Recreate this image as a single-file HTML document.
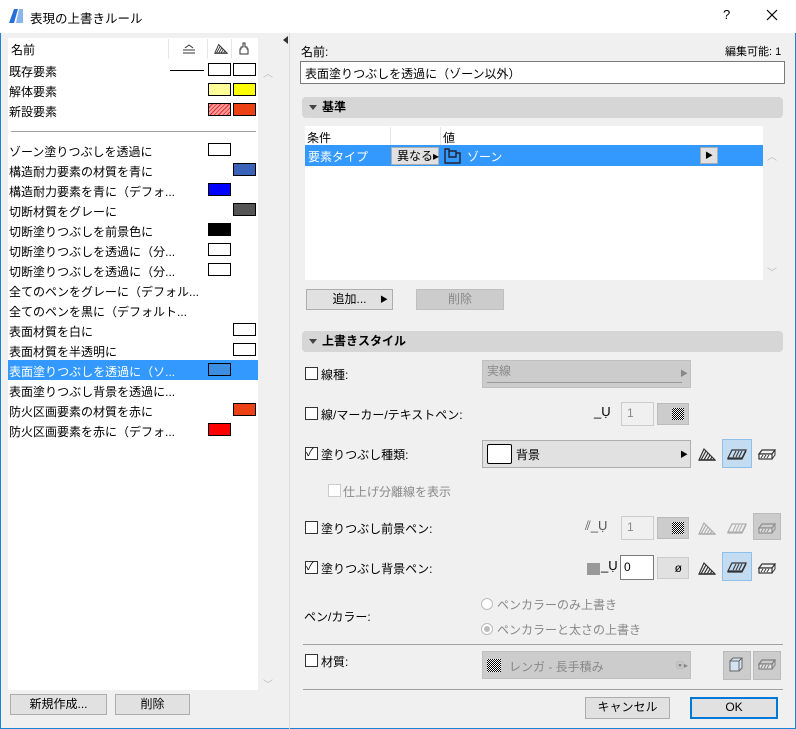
<!DOCTYPE html><html><head><meta charset="utf-8"><style>
*{box-sizing:border-box;margin:0;padding:0}
body{width:796px;height:729px;overflow:hidden;background:#f0f0f0;font-family:"Liberation Sans","Noto Sans CJK JP",sans-serif;font-size:12px;color:#000;position:relative}
.a{position:absolute;white-space:nowrap}
.sw{position:absolute;width:23px;height:13px;border:1px solid #000}
.btn{position:absolute;background:#e1e1e1;border:1px solid #adadad;text-align:center;line-height:19px}
.cb{position:absolute;width:13px;height:13px;border:1px solid #333;background:#fff}
.sec{position:absolute;left:302px;width:481px;height:21px;background:#d6d6d6;border-radius:4px;font-weight:bold;line-height:21px;padding-left:20px}
.sec:before{content:"";position:absolute;left:7px;top:8px;border-left:4px solid transparent;border-right:4px solid transparent;border-top:5px solid #444}
.fld{position:absolute;background:#ccc;border:1px solid #c0c0c0}
</style></head><body>
<svg width="0" height="0" style="position:absolute"><defs>
<symbol id="hat" viewBox="0 0 18 14"><path d="M1 13 L6 2 L17 13 Z M3 13 L8 4 M6 13 L10 6 M9 13 L12 8 M12 13 L14 10" fill="none" stroke="#333" stroke-width="1.2"/><path d="M1 13H17" stroke="#333" stroke-width="1.5"/></symbol>
<symbol id="box" viewBox="0 0 20 14"><path d="M1 12 L5 4 H19 L15 12 Z M1 12 V13 H15 L19 5" fill="none" stroke="#333" stroke-width="1.2"/><path d="M6 11 L9 5 M9 11 L12 5 M12 11 L15 5" stroke="#333"/></symbol>
<symbol id="flat" viewBox="0 0 20 14"><path d="M2 7 L5 3 H18 L15 7 Z" fill="none" stroke="#333" stroke-width="1.2"/><rect x="2" y="7" width="13" height="5" fill="#fff" stroke="#333" stroke-width="1.2"/><path d="M15 12 L18 8 V3" fill="none" stroke="#333"/><path d="M4 11 L6 8 M7 11 L9 8 M10 11 L12 8" stroke="#333"/></symbol>
</defs></svg>
<div class="a" style="left:0;top:0;width:796px;height:33px;background:#fff"></div>
<svg class="a" style="left:8px;top:8px" width="16" height="16"><path d="M1 15 L6 1 L10 1 L6 15Z" fill="#2a6fd6"/><path d="M8 15 L11 1 L15 1 L15 15Z" fill="#8ab6ee"/></svg>
<div class="a" style="left:30px;top:8px;font-size:12.5px">表現の上書きルール</div>
<div class="a" style="left:723px;top:7px;font-size:13px">?</div>
<svg class="a" style="left:766px;top:9px" width="12" height="12"><path d="M1 1L11 11M11 1L1 11" stroke="#000" stroke-width="1.2"/></svg>
<div class="a" style="left:795px;top:33px;width:1px;height:696px;background:#1883d7"></div>
<div class="a" style="left:0;top:33px;width:1px;height:696px;background:#1883d7"></div>
<div class="a" style="left:0;top:728px;width:796px;height:1px;background:#1883d7"></div>

<div class="a" style="left:8px;top:38px;width:250px;height:652px;background:#fff"></div>
<div class="a" style="left:168px;top:39px;width:1px;height:20px;background:#e6e6e6"></div>
<div class="a" style="left:207px;top:39px;width:1px;height:20px;background:#e6e6e6"></div>
<div class="a" style="left:231px;top:39px;width:1px;height:20px;background:#e6e6e6"></div>
<div class="a" style="left:11px;top:41px">名前</div>
<svg class="a" style="left:182px;top:44px" width="14" height="10"><path d="M1 9H13M1 6H13M3 4L7 1L11 4" fill="none" stroke="#333"/></svg>
<svg class="a" style="left:214px;top:42px" width="14" height="13"><use href="#hat"/></svg>
<svg class="a" style="left:239px;top:42px" width="10" height="13"><path d="M4 1H6V5H8V7H9V12H1V7H2V5H4Z" fill="none" stroke="#333"/></svg>
<div class="a" style="left:9px;top:63px">既存要素</div>
<div class="a" style="left:170px;top:70px;width:34px;height:1px;background:#000"></div>
<div class="sw" style="left:208px;top:63px;background:#fff"></div><div class="sw" style="left:233px;top:63px;background:#fff"></div>
<div class="a" style="left:9px;top:83px">解体要素</div>
<div class="sw" style="left:208px;top:83px;background:#ffff99"></div><div class="sw" style="left:233px;top:83px;background:#ffff00"></div>
<div class="a" style="left:9px;top:103px">新設要素</div>
<div class="sw" style="left:208px;top:103px;background:repeating-linear-gradient(135deg,#f99 0 2px,#e03030 2px 3px)"></div><div class="sw" style="left:233px;top:103px;background:#ec4015"></div>
<div class="a" style="left:11px;top:131px;width:245px;height:1px;background:#a0a0a0"></div>
<div class="a" style="left:263px;top:65px;color:#bbb;font-size:10px">︿</div>
<div class="a" style="left:263px;top:676px;color:#bbb;font-size:10px">﹀</div>
<div class="a" style="left:8px;top:360px;width:250px;height:20px;background:#3399ff"></div>
<div class="a" style="left:9px;top:142px;line-height:20px">ゾーン塗りつぶしを透過に<br>構造耐力要素の材質を青に<br>構造耐力要素を青に（デフォ...<br>切断材質をグレーに<br>切断塗りつぶしを前景色に<br>切断塗りつぶしを透過に（分...<br>切断塗りつぶしを透過に（分...<br>全てのペンをグレーに（デフォル...<br>全てのペンを黒に（デフォルト...<br>表面材質を白に<br>表面材質を半透明に<br><span style="color:#fff">表面塗りつぶしを透過に（ソ...</span><br>表面塗りつぶし背景を透過に...<br>防火区画要素の材質を赤に<br>防火区画要素を赤に（デフォ...</div>
<div class="sw" style="left:208px;top:143px;background:#fff"></div>
<div class="sw" style="left:233px;top:163px;background:#3a62b8"></div>
<div class="sw" style="left:208px;top:183px;background:#0000ff"></div>
<div class="sw" style="left:233px;top:203px;background:#555"></div>
<div class="sw" style="left:208px;top:223px;background:#000"></div>
<div class="sw" style="left:208px;top:243px;background:#fff"></div>
<div class="sw" style="left:208px;top:263px;background:#fff"></div>
<div class="sw" style="left:233px;top:323px;background:#fff"></div>
<div class="sw" style="left:233px;top:343px;background:#fff"></div>
<div class="sw" style="left:208px;top:363px;background:#3d8ee0"></div>
<div class="sw" style="left:233px;top:403px;background:#ec4015"></div>
<div class="sw" style="left:208px;top:423px;background:#ff0000"></div>
<div class="btn" style="left:10px;top:694px;width:97px;height:21px">新規作成...</div>
<div class="btn" style="left:115px;top:694px;width:75px;height:21px">削除</div>
<div class="a" style="left:283px;top:36px;border-top:4px solid transparent;border-bottom:4px solid transparent;border-right:5px solid #333"></div>
<div class="a" style="left:289px;top:33px;width:1px;height:696px;background:#ddd"></div>

<div class="a" style="left:301px;top:43px">名前:</div>
<div class="a" style="left:725px;top:43px;font-size:11px">編集可能: 1</div>
<div class="a" style="left:300px;top:61px;width:485px;height:23px;background:#fff;border:1px solid #7a7a7a;padding:3px 4px">表面塗りつぶしを透過に（ゾーン以外）</div>
<div class="sec" style="top:97px">基準</div>
<div class="a" style="left:305px;top:126px;width:458px;height:154px;background:#fff"></div>
<div class="a" style="left:390px;top:127px;width:1px;height:18px;background:#e6e6e6"></div>
<div class="a" style="left:440px;top:127px;width:1px;height:18px;background:#e6e6e6"></div>
<div class="a" style="left:307px;top:129px">条件</div>
<div class="a" style="left:443px;top:129px">値</div>
<div class="a" style="left:305px;top:145px;width:458px;height:21px;background:#3399ff"></div>
<div class="a" style="left:308px;top:148px;color:#fff">要素タイプ</div>
<div class="a" style="left:391px;top:147px;width:48px;height:18px;background:#e1e1e1;border:1px solid #adadad;padding-left:5px;line-height:16px">異なる▸</div>
<svg class="a" style="left:444px;top:148px" width="17" height="16"><path d="M1 1H5V3H12V5H16V15H1Z M5 3V9H12V5" fill="none" stroke="#223" stroke-width="1.4"/></svg>
<div class="a" style="left:467px;top:148px;color:#fff">ゾーン</div>
<div class="a" style="left:700px;top:147px;width:18px;height:17px;background:#e1e1e1;border:1px solid #adadad;text-align:center;font-size:8px;line-height:15px">▶</div>
<div class="a" style="left:767px;top:148px;color:#bbb;font-size:10px">︿</div>
<div class="a" style="left:767px;top:264px;color:#bbb;font-size:10px">﹀</div>
<div class="btn" style="left:306px;top:289px;width:87px;height:21px">追加...<span style="position:absolute;right:4px;font-size:8px">▶</span></div>
<div class="btn" style="left:416px;top:289px;width:88px;height:21px;background:#ccc;border-color:#bfbfbf;color:#888">削除</div>

<div class="sec" style="top:331px">上書きスタイル</div>
<div class="cb" style="left:305px;top:367px"></div><div class="a" style="left:321px;top:366px">線種:</div>
<div class="fld" style="left:482px;top:360px;width:209px;height:28px;color:#888;padding:1px 4px">実線<div style="position:absolute;left:4px;right:8px;top:21px;height:1px;background:#999"></div><span style="position:absolute;right:2px;top:7px;font-size:8px">▶</span></div>
<div class="cb" style="left:305px;top:407px"></div><div class="a" style="left:321px;top:406px">線/マーカー/テキストペン:</div>
<div class="a" style="left:594px;top:404px;font-size:13px">_Ụ</div>
<div class="a" style="left:621px;top:402px;width:33px;height:24px;background:#f0f0f0;border:1px solid #ccc;color:#888;padding:3px 5px">1</div>
<div class="a" style="left:657px;top:403px;width:32px;height:22px;background:#ccc;border:1px solid #bbb"><div style="position:absolute;left:14px;top:4px;width:12px;height:12px;background:repeating-conic-gradient(#000 0 25%,#fff 0 50%) 0 0/2px 2px"></div></div>
<div class="cb" style="left:305px;top:447px;font-size:11px;line-height:11px">✓</div><div class="a" style="left:321px;top:446px">塗りつぶし種類:</div>
<div class="a" style="left:482px;top:440px;width:209px;height:28px;background:#e1e1e1;border:1px solid #adadad"><div style="position:absolute;left:4px;top:3px;width:25px;height:20px;background:#fff;border:1px solid #000;border-radius:2px"></div><span style="position:absolute;left:33px;top:5px">背景</span><span style="position:absolute;right:2px;top:8px;font-size:8px">▶</span></div>
<svg class="a" style="left:698px;top:447px" width="18" height="14"><use href="#hat"/></svg>
<div class="a" style="left:722px;top:439px;width:30px;height:29px;background:#c4dcf2;border:1px solid #90c0ea"></div>
<svg class="a" style="left:727px;top:446px" width="20" height="14"><use href="#box"/></svg>
<svg class="a" style="left:757px;top:447px" width="20" height="14"><use href="#flat"/></svg>
<div class="a" style="left:328px;top:484px;width:13px;height:13px;border:1px solid #ccc;background:#fff"></div><div class="a" style="left:343px;top:483px;color:#888">仕上げ分離線を表示</div>
<div class="cb" style="left:305px;top:521px"></div><div class="a" style="left:321px;top:520px">塗りつぶし前景ペン:</div>
<div class="a" style="left:585px;top:518px;font-size:13px;color:#555">⫽_Ụ</div>
<div class="a" style="left:621px;top:516px;width:33px;height:24px;background:#f0f0f0;border:1px solid #ccc;color:#888;padding:3px 5px">1</div>
<div class="a" style="left:657px;top:517px;width:32px;height:22px;background:#ccc;border:1px solid #bbb"><div style="position:absolute;left:14px;top:4px;width:12px;height:12px;background:repeating-conic-gradient(#000 0 25%,#fff 0 50%) 0 0/2px 2px"></div></div>
<svg class="a" style="left:698px;top:521px;opacity:.35" width="18" height="14"><use href="#hat"/></svg>
<svg class="a" style="left:727px;top:520px;opacity:.35" width="20" height="14"><use href="#box"/></svg>
<div class="a" style="left:753px;top:513px;width:28px;height:27px;background:#ccc;border:1px solid #bbb"></div>
<svg class="a" style="left:757px;top:521px;opacity:.4" width="20" height="14"><use href="#flat"/></svg>
<div class="cb" style="left:305px;top:561px;font-size:11px;line-height:11px">✓</div><div class="a" style="left:321px;top:560px">塗りつぶし背景ペン:</div>
<div class="a" style="left:587px;top:563px;width:13px;height:12px;background:#999"></div><div class="a" style="left:601px;top:558px;font-size:13px">_Ụ</div>
<div class="a" style="left:620px;top:555px;width:34px;height:25px;background:#fff;border:1px solid #7a7a7a;padding:4px 3px">0</div>
<div class="a" style="left:657px;top:557px;width:32px;height:22px;background:#e1e1e1;border:1px solid #ccc;text-align:right;padding:3px 6px">ø</div>
<svg class="a" style="left:698px;top:561px" width="18" height="14"><use href="#hat"/></svg>
<div class="a" style="left:722px;top:552px;width:30px;height:29px;background:#c4dcf2;border:1px solid #90c0ea"></div>
<svg class="a" style="left:727px;top:559px" width="20" height="14"><use href="#box"/></svg>
<svg class="a" style="left:757px;top:561px" width="20" height="14"><use href="#flat"/></svg>
<div class="a" style="left:304px;top:608px">ペン/カラー:</div>
<div class="a" style="left:481px;top:598px;width:12px;height:12px;border:1px solid #bbb;border-radius:50%;background:#fff"></div><div class="a" style="left:497px;top:596px;color:#888">ペンカラーのみ上書き</div>
<div class="a" style="left:481px;top:623px;width:12px;height:12px;border:1px solid #bbb;border-radius:50%;background:#fff"><div style="margin:2px;width:6px;height:6px;border-radius:50%;background:#bbb"></div></div><div class="a" style="left:497px;top:621px;color:#888">ペンカラーと太さの上書き</div>
<div class="a" style="left:303px;top:644px;width:480px;height:1px;background:#a0a0a0"></div>
<div class="cb" style="left:305px;top:654px"></div><div class="a" style="left:321px;top:653px">材質:</div>
<div class="fld" style="left:482px;top:651px;width:209px;height:28px;color:#888"><div style="position:absolute;left:4px;top:7px;width:14px;height:13px;background:repeating-conic-gradient(#000 0 25%,#fff 0 50%) 0 0/2px 2px"></div><span style="position:absolute;left:26px;top:6px">レンガ - 長手積み</span><span style="position:absolute;right:2px;top:8px;font-size:8px">▣▸</span></div>
<div class="a" style="left:723px;top:651px;width:28px;height:29px;background:#ccc;border:1px solid #bbb"></div>
<svg class="a" style="left:728px;top:656px" width="18" height="18"><path d="M2 5H11V15H2Z M2 5L5 2H14V12L11 15 M11 5L14 2" fill="#d4e2f2" stroke="#666"/></svg>
<div class="a" style="left:753px;top:651px;width:28px;height:29px;background:#ccc;border:1px solid #bbb"></div>
<svg class="a" style="left:757px;top:657px;opacity:.5" width="20" height="14"><use href="#flat"/></svg>
<div class="a" style="left:303px;top:689px;width:480px;height:1px;background:#a0a0a0"></div>
<div class="btn" style="left:585px;top:697px;width:85px;height:22px">キャンセル</div>
<div class="btn" style="left:690px;top:697px;width:88px;height:22px;border:2px solid #0078d7;line-height:17px">OK</div>
</body></html>
